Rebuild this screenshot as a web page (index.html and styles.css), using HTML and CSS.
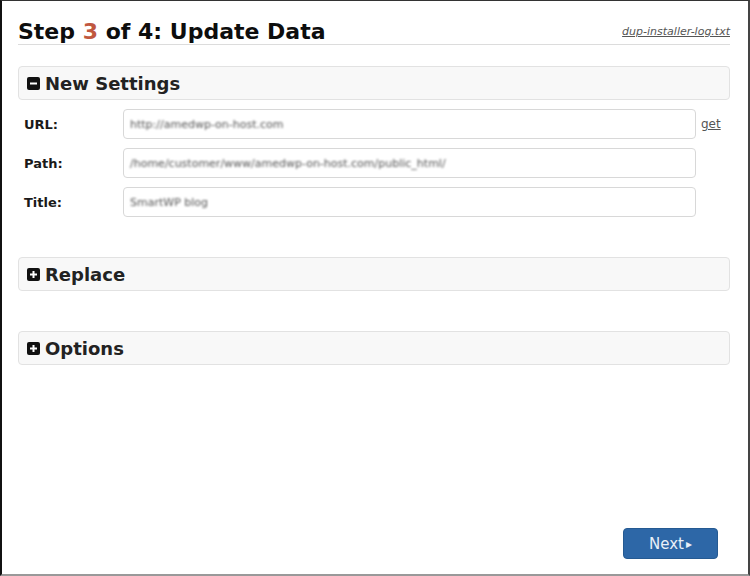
FILE: index.html
```html
<!DOCTYPE html>
<html>
<head>
<meta charset="utf-8">
<link rel="stylesheet" href="styles.css">
</head>
<body>
<div class="frame">
  <div class="header">
    <h1 class="title">Step <span class="step-num">3</span> of 4: Update Data</h1>
    <a class="log-link" href="#">dup-installer-log.txt</a>
  </div>

  <div class="section-bar">
    <span class="toggle-icon">
      <svg width="13" height="13" viewBox="0 0 13 13"><rect x="0" y="0" width="13" height="13" rx="2" fill="#111"/><rect x="3" y="5.5" width="7" height="2" fill="#fff"/></svg>
    </span>
    <span class="section-title">New Settings</span>
  </div>

  <div class="form">
    <div class="form-row">
      <label class="form-label">URL:</label>
      <div class="form-input"><span class="blurred">http://amedwp-on-host.com</span></div>
      <a class="get-link" href="#">get</a>
    </div>
    <div class="form-row">
      <label class="form-label">Path:</label>
      <div class="form-input"><span class="blurred">/home/customer/www/amedwp-on-host.com/public_html/</span></div>
      <span class="get-spacer"></span>
    </div>
    <div class="form-row">
      <label class="form-label">Title:</label>
      <div class="form-input"><span class="blurred">SmartWP blog</span></div>
      <span class="get-spacer"></span>
    </div>
  </div>

  <div class="section-bar section-gap">
    <span class="toggle-icon">
      <svg width="13" height="13" viewBox="0 0 13 13"><rect x="0" y="0" width="13" height="13" rx="2" fill="#111"/><rect x="3" y="5.5" width="7" height="2" fill="#fff"/><rect x="5.5" y="3" width="2" height="7" fill="#fff"/></svg>
    </span>
    <span class="section-title">Replace</span>
  </div>

  <div class="section-bar section-gap">
    <span class="toggle-icon">
      <svg width="13" height="13" viewBox="0 0 13 13"><rect x="0" y="0" width="13" height="13" rx="2" fill="#111"/><rect x="3" y="5.5" width="7" height="2" fill="#fff"/><rect x="5.5" y="3" width="2" height="7" fill="#fff"/></svg>
    </span>
    <span class="section-title">Options</span>
  </div>

  <div class="footer">
    <button class="next-btn">Next<span class="next-arrow">&#9656;</span></button>
  </div>
</div>
</body>
</html>
```
FILE: styles.css
```css
* { box-sizing: border-box; }
html, body { margin: 0; padding: 0; background: #fff; }
body { font-family: "DejaVu Sans", Verdana, sans-serif; color: #000; }

.frame {
  width: 750px;
  height: 576px;
  border-left: 2px solid #111;
  border-top: 1px solid #333;
  border-right: 2px solid #444;
  border-bottom: 2px solid #999;
  padding: 0 18px 0 16px;
  display: flex;
  flex-direction: column;
}

.header {
  display: flex;
  justify-content: space-between;
  align-items: flex-end;
  border-bottom: 1px solid #dcdcdc;
  height: 44px;
}
.title {
  margin: 0;
  font-size: 22px;
  font-weight: bold;
  line-height: 22px;
  color: #0d0d0d;
  margin-bottom: 1px;
}
.step-num { color: #c0573f; }
.log-link {
  font-size: 11px;
  font-style: italic;
  color: #555;
  text-decoration: underline;
  margin-bottom: 6px;
}

.section-bar {
  margin-top: 21px;
  height: 34px;
  background: #f8f8f8;
  border: 1px solid #e2e2e2;
  border-radius: 4px;
  display: flex;
  align-items: center;
  padding-left: 8px;
  gap: 5px;
}
.section-gap { margin-top: 40px; }
.toggle-icon { display: flex; }
.section-title {
  font-size: 18px;
  font-weight: bold;
  color: #222;
}

.form {
  margin-top: 9px;
  display: flex;
  flex-direction: column;
  gap: 9px;
}
.form-row {
  display: flex;
  align-items: center;
  gap: 5px;
}
.form-label {
  width: 100px;
  padding-left: 6px;
  font-size: 13px;
  font-weight: bold;
  color: #1a1a1a;
}
.form-input {
  width: 573px;
  height: 30px;
  border: 1px solid #d8d8d8;
  border-radius: 4px;
  display: flex;
  align-items: center;
  padding-left: 6px;
  background: #fff;
}
.blurred {
  font-size: 11px;
  color: #555;
  filter: blur(1.1px);
}
.get-link {
  font-size: 12px;
  color: #555;
  text-decoration: underline;
}
.get-spacer { width: 20px; }

.footer {
  margin-top: auto;
  margin-bottom: 15px;
  display: flex;
  justify-content: flex-end;
  padding-right: 12px;
}
.next-btn {
  width: 95px;
  height: 31px;
  background: #2d67a7;
  border: 1px solid #255a92;
  border-radius: 4px;
  color: #e9f0f8;
  font-family: "DejaVu Sans", Verdana, sans-serif;
  font-size: 15px;
  display: flex;
  align-items: center;
  justify-content: center;
  gap: 2px;
}
.next-arrow { font-size: 12px; }
```
